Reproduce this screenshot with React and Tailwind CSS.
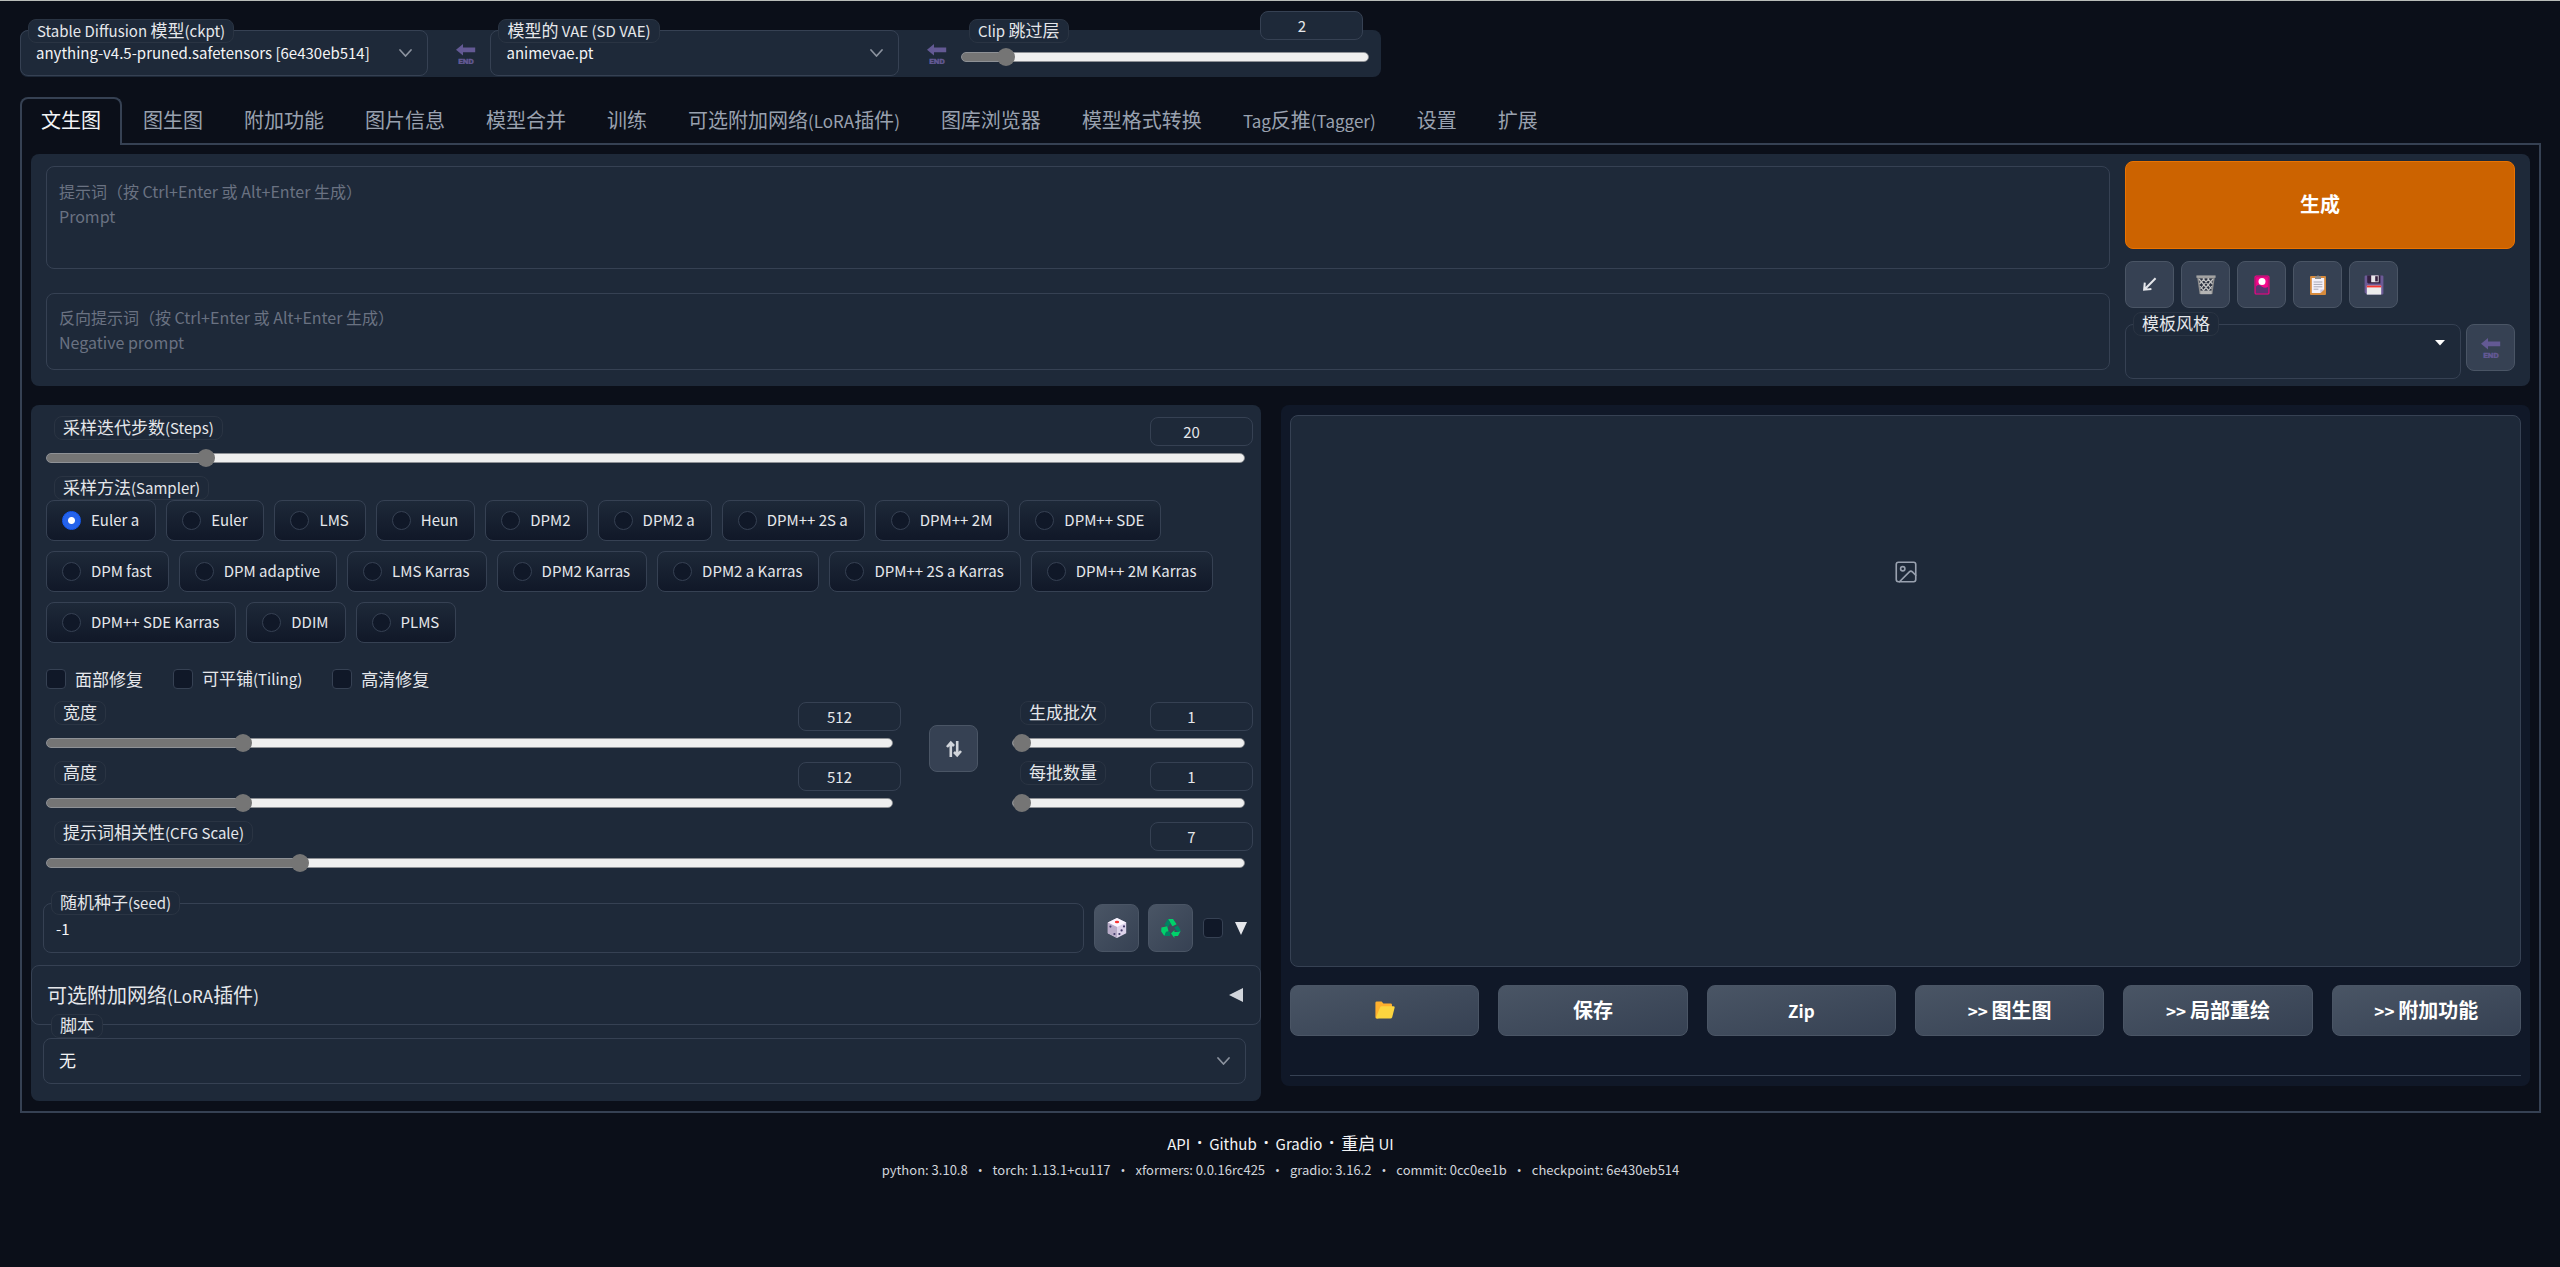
import { useState } from "react";
import { Image } from "lucide-react";

const TABS = [
  "文生图",
  "图生图",
  "附加功能",
  "图片信息",
  "模型合并",
  "训练",
  "可选附加网络(LoRA插件)",
  "图库浏览器",
  "模型格式转换",
  "Tag反推(Tagger)",
  "设置",
  "扩展",
];

const SAMPLERS = [
  "Euler a",
  "Euler",
  "LMS",
  "Heun",
  "DPM2",
  "DPM2 a",
  "DPM++ 2S a",
  "DPM++ 2M",
  "DPM++ SDE",
  "DPM fast",
  "DPM adaptive",
  "LMS Karras",
  "DPM2 Karras",
  "DPM2 a Karras",
  "DPM++ 2S a Karras",
  "DPM++ 2M Karras",
  "DPM++ SDE Karras",
  "DDIM",
  "PLMS",
];

const VERSIONS = [
  "python: 3.10.8",
  "torch: 1.13.1+cu117",
  "xformers: 0.0.16rc425",
  "gradio: 3.16.2",
  "commit: 0cc0ee1b",
  "checkpoint: 6e430eb514",
];

const LINKS = [
  { text: "API", href: "#api" },
  { text: "Github", href: "#github" },
  { text: "Gradio", href: "#gradio" },
  { text: "重启 UI", href: "#reload" },
];

// Latin runs are set a little smaller than the Chinese around them
function Mixed({ text, latin = "text-[15px]" }) {
  return (
    <span className="whitespace-pre">
      {text.split(/([\x20-\x7e]+)/).map((part, i) =>
        i % 2 === 1 ? (
          <span key={i} className={latin}>
            {part}
          </span>
        ) : (
          part
        )
      )}
    </span>
  );
}

function EndIcon() {
  return (
    <svg width="20" height="20" viewBox="0 0 20 20" fill="#635994" aria-hidden="true">
      <path d="M0 5.700 7 0v3.400h12.200v4.800H7v3.300z" />
      <text
        x="10"
        y="19.500"
        textAnchor="middle"
        stroke="#635994"
        strokeWidth=".5"
        className="font-['Roboto',sans-serif] text-[8px] font-bold"
      >
        END
      </text>
    </svg>
  );
}

function Chevron({ className }) {
  return (
    <svg
      width="13"
      height="8"
      viewBox="0 0 13 8"
      fill="none"
      stroke="#8b929e"
      strokeWidth="1.700"
      strokeLinecap="round"
      aria-hidden="true"
      className={`pointer-events-none absolute ${className}`}
    >
      <path d="M1 1l5.500 6L12 1" />
    </svg>
  );
}

function ArrowIcon() {
  return (
    <svg width="15" height="15" viewBox="0 0 15 15" aria-hidden="true">
      <path d="M13.600 1.200 4.200 10.800" stroke="#e5e7eb" strokeWidth="2" />
      <path d="M1 13.800 1.800 5.600l2 .2-.3 3.800 2 2 3.800-.5.200 2z" fill="#e5e7eb" />
    </svg>
  );
}

function TrashIcon() {
  return (
    <svg width="20" height="20" viewBox="0 0 20 20" aria-hidden="true">
      <path d="M1 1h18l-2.600 18H3.600z" fill="#8c8c8c" />
      <path d="M3 3.400h14L15.200 16H4.800z" fill="#2b3140" />
      <path
        d="M3 4l10 12M7 3.400 15.400 14M11.600 3.400 16.400 9M4 11l4 5M17 4 7 16M13 3.400 4.600 14M8.400 3.400 3.600 9M16 11l-4 5"
        stroke="#c4c4c4"
        strokeWidth="1.200"
      />
      <path d="M.4.400h19.200v2.400H.4z" fill="#a3a3a3" />
      <path d="M4.400 15.600h11.200v3.600H4.400z" fill="#b4b4b4" />
    </svg>
  );
}

function CardIcon() {
  return (
    <svg width="16" height="20" viewBox="0 0 16 20" aria-hidden="true">
      <rect x=".5" y=".5" width="15" height="19" rx="1.600" fill="#f5078b" />
      <rect x="1.800" y="1.800" width="12.400" height="16.400" fill="none" stroke="#9c1668" strokeWidth=".7" />
      <path d="M2 11.400q3-3 6 .4 3 1.600 6 .2v6.200H2z" fill="#5b3470" />
      <circle cx="8" cy="6.400" r="3.500" fill="#fff" />
    </svg>
  );
}

function ClipboardIcon() {
  return (
    <svg width="16" height="20" viewBox="0 0 16 20" aria-hidden="true">
      <rect x="0" y="1" width="16" height="19" rx="1" fill="#d68a3c" />
      <path d="M1.800 3h12.400v11.400L10.400 18H1.800z" fill="#f4f1fa" />
      <path d="M14.200 14.400 10.400 18v-3.600z" fill="#cfc6dd" />
      <path d="M6.400 1.400a1.700 1.400 0 0 1 3.200 0H11V4H5V1.400z" fill="#8b8b8b" />
      <path d="M3.600 7h8.800M3.600 9.400h8.800M3.600 11.800h8.800M3.600 14.200h4.800" stroke="#a7a7b4" strokeWidth="1" />
    </svg>
  );
}

function FloppyIcon() {
  return (
    <svg width="20" height="20" viewBox="0 0 20 20" aria-hidden="true">
      <path d="M1.600.4h16.800q1 0 1 1v17.200q0 1-1 1H3L.6 17.400v-16q0-1 1-1z" fill="#6c5a96" />
      <path d="M3.200.4h13.200v8H4.400L3.200 7.400z" fill="#34203f" />
      <path d="M7.200.4h7.400v6.800H7.200z" fill="#e8e6ea" />
      <path d="M11.200 1.200h2.600v5.200h-2.600z" fill="#34203f" />
      <path d="M2.800 10.600h14.400v9H2.800z" fill="#ececec" />
      <path d="M2.800 10.600h14.400v1.800H2.800z" fill="#f5352f" />
    </svg>
  );
}

function DiceIcon() {
  return (
    <svg width="20" height="20" viewBox="0 0 20 20" aria-hidden="true">
      <path d="M10 0 19.200 4.600v10.600L10 20 .8 15.200V4.600z" fill="#ddd3ea" />
      <path d="M10 0 19.200 4.600 10 9 .8 4.600z" fill="#faf5ff" />
      <path d="M.8 4.600 10 9v11L.8 15.200z" fill="#b9acc9" />
      <ellipse cx="10" cy="4" rx="2.200" ry="1.200" fill="#f8312f" />
      <g fill="#433b6b">
        <circle cx="3.400" cy="8.600" r="1.100" />
        <circle cx="7.400" cy="16" r="1.100" />
        <circle cx="12.400" cy="16" r="1.100" />
        <circle cx="14.600" cy="12.400" r="1.100" />
        <circle cx="17" cy="8.400" r="1.100" />
      </g>
    </svg>
  );
}

function RecycleIcon() {
  return (
    <svg width="20" height="20" viewBox="0 0 20 20" aria-hidden="true">
      <path d="M7 1h5l3.600 5.200-4.200 2-1.800-3z" fill="#00d26a" />
      <path d="M7 1 9.400 5l-2.200 4-3.800-2.200z" fill="#008463" />
      <path d="m.4 9.600 5.800-1.400 1.400 5.400-2 .2L3.400 18 .2 13.600z" fill="#00d26a" />
      <path d="M3.400 18 5 13.800h4.200V18z" fill="#008463" />
      <path d="M10 15.600 13.400 12v2h3l3.200-1-2.600 5h-3.600v2z" fill="#00d26a" />
      <path d="m13.200 9.600 3.600-2.200 3 5.200-3.200 1.600z" fill="#008463" />
    </svg>
  );
}

function FolderIcon() {
  return (
    <svg width="20" height="18" viewBox="0 0 20 20" preserveAspectRatio="none" aria-hidden="true">
      <path d="M.4 2Q.4.600 1.800.6h4.800l1.800 2.200h7.200q1.400 0 1.400 1.400V8L3 19.400H1.800Q.4 19.400.4 18z" fill="#ffb02e" />
      <path d="M6.800 5.800h11.600q1.600 0 1.200 1.600l-2.400 10.600q-.4 1.400-1.800 1.400H2.200q-1.500 0-1.100-1.400L5 7.200q.4-1.400 1.800-1.400z" fill="#fcd53f" />
    </svg>
  );
}

function SwapIcon() {
  return (
    <svg width="16" height="18" viewBox="0 0 16 18" fill="none" stroke="#d1d5db" strokeWidth="2.600" aria-hidden="true">
      <path d="M4.800 17V2.500M1 7l3.800-4.400L8 6M11.200 1v14.500M15 11l-3.800 4.400L8 12" />
    </svg>
  );
}

function NumberBox({ label, value, onChange, className = "" }) {
  return (
    <input
      type="text"
      inputMode="numeric"
      aria-label={label}
      value={value}
      onChange={(e) => onChange(e.target.value)}
      className={`h-[29px] w-[103px] rounded-lg border border-gray-700 bg-gray-800 pr-5 text-center text-[15px] text-gray-200 focus:outline-none ${className}`}
    />
  );
}

// small bordered caption that sits over the edge of a field
function Caption({ htmlFor, text, className = "" }) {
  return (
    <label
      htmlFor={htmlFor}
      className={`inline-flex h-6 items-center rounded-lg border border-[#2a3443] bg-gray-800 px-2 pb-[3px] text-[17px] text-gray-200 ${className}`}
    >
      <Mixed text={text} />
    </label>
  );
}

function Range({ id, value, min, max, step = 1, onChange, className = "" }) {
  const fill = ((value - min) / (max - min)) * 100;
  return (
    <input
      id={id}
      type="range"
      min={min}
      max={max}
      step={step}
      value={value}
      onChange={(e) => onChange(e.target.value)}
      style={{ "--fill": `${fill}%` }}
      className={`block h-5 w-full appearance-none bg-transparent focus:outline-none [&::-webkit-slider-runnable-track]:h-[10px] [&::-webkit-slider-runnable-track]:rounded-full [&::-webkit-slider-runnable-track]:border [&::-webkit-slider-runnable-track]:border-[#8e9196] [&::-webkit-slider-runnable-track]:bg-[linear-gradient(to_right,#757575_var(--fill),#efefef_var(--fill))] [&::-webkit-slider-thumb]:mt-[-5px] [&::-webkit-slider-thumb]:size-[18px] [&::-webkit-slider-thumb]:appearance-none [&::-webkit-slider-thumb]:rounded-full [&::-webkit-slider-thumb]:bg-[#757575] ${className}`}
    />
  );
}

function Slider({ id, label, initial, min, max, step }) {
  const [value, setValue] = useState(initial);
  return (
    <div className="pl-1">
      <div className="flex h-8 items-start justify-between pl-2">
        <Caption htmlFor={id} text={label} />
        <NumberBox label={label} value={value} onChange={setValue} className="mt-px" />
      </div>
      <div className="pr-2">
        <Range id={id} value={value} min={min} max={max} step={step} onChange={setValue} />
      </div>
    </div>
  );
}

function TopSelect({ id, label, value }) {
  return (
    <div className="relative flex-1">
      <Caption htmlFor={id} text={label} className="absolute -top-[11px] left-2" />
      <select
        id={id}
        className="block h-[46px] w-full appearance-none rounded-lg border border-gray-700 bg-gray-800 px-[15px] text-[15px] text-gray-100 focus:outline-none"
      >
        <option>{value}</option>
      </select>
      <Chevron className="top-[19px] right-4" />
    </div>
  );
}

function Checkbox({ label }) {
  return (
    <label className="flex items-center gap-[9px] text-[17px] leading-5 text-gray-200">
      <input
        type="checkbox"
        className="size-5 appearance-none rounded border border-gray-700 bg-gray-900 checked:bg-blue-600"
      />
      <Mixed text={label} />
    </label>
  );
}

function ToolButton({ label, children, className = "" }) {
  return (
    <button
      type="button"
      aria-label={label}
      className={`flex h-[47px] w-[49px] shrink-0 items-center justify-center rounded-lg border border-gray-600 bg-gray-700 ${className}`}
    >
      {children}
    </button>
  );
}

function QuickSettings() {
  const [clip, setClip] = useState(2);
  return (
    <div className="flex h-[47px] w-[54%] rounded-lg bg-gray-800 pr-3">
      <TopSelect id="ckpt" label="Stable Diffusion 模型(ckpt)" value="anything-v4.5-pruned.safetensors [6e430eb514]" />
      <button type="button" aria-label="刷新模型" className="flex w-[62px] items-center justify-center pl-[14px]">
        <EndIcon />
      </button>
      <TopSelect id="vae" label="模型的 VAE (SD VAE)" value="animevae.pt" />
      <button type="button" aria-label="刷新 VAE" className="flex w-[62px] items-center justify-center pl-[14px]">
        <EndIcon />
      </button>
      <div className="relative flex-1">
        <Caption htmlFor="clip" text="Clip 跳过层" className="absolute -top-[11px] left-2" />
        <NumberBox label="Clip 跳过层" value={clip} onChange={setClip} className="absolute -top-[19px] right-[6px]" />
        <Range id="clip" value={clip} min={1} max={12} onChange={setClip} className="mt-[17px]" />
      </div>
    </div>
  );
}

function PromptPanel() {
  return (
    <section className="flex gap-[15px] rounded-lg bg-gray-800 px-[15px] pt-[7px] pb-[7px]">
      <div className="flex flex-1 flex-col gap-6 pt-[5px]">
        <textarea
          aria-label="提示词"
          placeholder={"提示词（按 Ctrl+Enter 或 Alt+Enter 生成）\nPrompt"}
          className="block h-[103px] w-full resize-none rounded-lg border border-gray-700 bg-gray-800 px-3 py-3 text-base leading-[25px] text-gray-100 placeholder:text-gray-500 focus:outline-none"
        />
        <textarea
          aria-label="反向提示词"
          placeholder={"反向提示词（按 Ctrl+Enter 或 Alt+Enter 生成）\nNegative prompt"}
          className="block h-[77px] w-full resize-none rounded-lg border border-gray-700 bg-gray-800 px-3 py-[11px] text-base leading-[25px] text-gray-100 placeholder:text-gray-500 focus:outline-none"
        />
      </div>
      <div className="w-[390px] shrink-0">
        <button
          type="button"
          className="h-[88px] w-full rounded-lg border border-[#ea7300] bg-[#cc6300] pb-[3px] text-xl font-bold text-white"
        >
          生成
        </button>
        <div className="mt-3 flex gap-[7px]">
          <ToolButton label="读取参数"><ArrowIcon /></ToolButton>
          <ToolButton label="清空提示词"><TrashIcon /></ToolButton>
          <ToolButton label="显示附加网络"><CardIcon /></ToolButton>
          <ToolButton label="应用模板"><ClipboardIcon /></ToolButton>
          <ToolButton label="保存模板"><FloppyIcon /></ToolButton>
        </div>
        <div className="mt-4 flex gap-[5px]">
          <div className="relative flex-1">
            <Caption htmlFor="styles" text="模板风格" className="absolute -top-3 left-2" />
            <select
              id="styles"
              className="block h-[55px] w-full appearance-none rounded-lg border border-gray-700 bg-gray-800 px-3 text-base text-gray-100"
            />
            <svg className="pointer-events-none absolute top-4 right-4" width="10" height="6" viewBox="0 0 10 6" fill="#fff">
              <path d="M0 0h10L5 5.500z" />
            </svg>
          </div>
          <ToolButton label="刷新模板"><EndIcon /></ToolButton>
        </div>
      </div>
    </section>
  );
}

function SettingsPanel() {
  const [sampler, setSampler] = useState("Euler a");
  return (
    <section className="rounded-lg bg-gray-800 pt-[11px] pb-[17px]">
      <div className="pr-2 pl-[11px]">
        <Slider id="steps" label="采样迭代步数(Steps)" initial={20} min={1} max={150} />
      </div>

      <div role="radiogroup" aria-label="采样方法" className="mt-2 pl-[15px]">
        <Caption text="采样方法(Sampler)" className="ml-2 align-top" />
        <div className="flex flex-wrap gap-[10px]">
          {SAMPLERS.map((name) => (
            <label
              key={name}
              className="flex h-[41px] items-center gap-[10px] rounded-lg border border-gray-700 bg-linear-to-b from-gray-800 to-gray-900 pr-4 pl-[15px] text-[15px] text-gray-200"
            >
              <input
                type="radio"
                name="sampler"
                checked={sampler === name}
                onChange={() => setSampler(name)}
                className="size-[19px] appearance-none rounded-full border border-gray-700 bg-gray-900 checked:border-blue-600 checked:bg-[radial-gradient(circle,#fff_0_3px,#2563eb_4px)]"
              />
              {name}
            </label>
          ))}
        </div>
      </div>

      <div className="mt-[25px] flex gap-[30px] pl-[15px]">
        <Checkbox label="面部修复" />
        <Checkbox label="可平铺(Tiling)" />
        <Checkbox label="高清修复" />
      </div>

      <div className="mt-3 flex pr-2 pl-[11px]">
        <div className="flex flex-1 flex-col gap-2">
          <Slider id="width" label="宽度" initial={512} min={64} max={2048} step={8} />
          <Slider id="height" label="高度" initial={512} min={64} max={2048} step={8} />
        </div>
        <ToolButton label="交换宽高" className="mt-6 mr-[30px] ml-7"><SwapIcon /></ToolButton>
        <div className="flex w-[245px] flex-col gap-2">
          <Slider id="batch-count" label="生成批次" initial={1} min={1} max={100} />
          <Slider id="batch-size" label="每批数量" initial={1} min={1} max={8} />
        </div>
      </div>

      <div className="mt-2 pr-2 pl-[11px]">
        <Slider id="cfg" label="提示词相关性(CFG Scale)" initial={7} min={1} max={30} />
      </div>

      <div className="mt-[30px] flex items-center pr-[14px] pl-3">
        <div className="relative flex-1">
          <Caption htmlFor="seed" text="随机种子(seed)" className="absolute -top-3 left-2" />
          <input
            id="seed"
            type="text"
            defaultValue="-1"
            className="block h-[50px] w-full rounded-lg border border-gray-700 bg-gray-800 px-3 text-[15px] text-gray-100 focus:outline-none"
          />
        </div>
        <button
          type="button"
          aria-label="随机"
          className="ml-[10px] flex h-12 w-[45px] items-center justify-center rounded-lg border border-gray-600 bg-linear-to-br from-gray-600 to-gray-700"
        >
          <DiceIcon />
        </button>
        <button
          type="button"
          aria-label="重用种子"
          className="ml-[9px] flex h-12 w-[45px] items-center justify-center rounded-lg border border-gray-600 bg-linear-to-br from-gray-600 to-gray-700"
        >
          <RecycleIcon />
        </button>
        <label className="ml-[10px] flex items-center gap-3">
          <input
            type="checkbox"
            aria-label="更多种子选项"
            className="size-5 appearance-none rounded border border-gray-700 bg-gray-900 checked:bg-blue-600"
          />
          <svg width="12" height="13" viewBox="0 0 12 13" fill="#e5e7eb" aria-hidden="true">
            <path d="M0 0h12L6 13z" />
          </svg>
        </label>
      </div>

      <button
        type="button"
        className="mt-3 flex h-[60px] w-full items-center justify-between rounded-lg border border-gray-700 pr-[17px] pl-[15px] text-xl text-gray-200"
      >
        <Mixed text="可选附加网络(LoRA插件)" latin="text-[17px]" />
        <svg width="14" height="14" viewBox="0 0 14 14" fill="#d1d5db" aria-hidden="true">
          <path d="M14 0v14L0 7z" />
        </svg>
      </button>

      <div className="relative mt-[13px] mr-[15px] ml-3">
        <Caption htmlFor="script" text="脚本" className="absolute -top-6 left-2" />
        <select
          id="script"
          className="block h-[46px] w-full appearance-none rounded-lg border border-gray-700 bg-gray-800 px-[15px] pb-[2px] text-[17px] text-gray-100 focus:outline-none"
        >
          <option>无</option>
        </select>
        <Chevron className="top-[19px] right-4" />
      </div>
    </section>
  );
}

function OutputPanel() {
  const actions = ["保存", "Zip", ">> 图生图", ">> 局部重绘", ">> 附加功能"];
  const buttonClass =
    "flex h-[51px] items-center justify-center rounded-lg border border-gray-600 bg-linear-to-br from-gray-600 to-gray-700 pb-[2px] text-xl font-bold text-white";
  return (
    <section className="rounded-lg bg-gray-900 px-[9px] pt-[10px] pb-[10px]">
      <div className="flex h-[552px] justify-center rounded-lg border border-gray-700 bg-gray-800 pt-[143px]">
        <Image className="size-[26px] text-gray-400" strokeWidth={1.5} />
      </div>
      <div className="mt-[18px] grid grid-cols-6 gap-[19px]">
        <button type="button" aria-label="打开文件夹" className={buttonClass}>
          <FolderIcon />
        </button>
        {actions.map((action) => (
          <button key={action} type="button" className={buttonClass}>
            <Mixed text={action} latin="text-[17px]" />
          </button>
        ))}
      </div>
      <hr className="mt-[39px] border-gray-700" />
    </section>
  );
}

export default function App() {
  const [tab, setTab] = useState(TABS[0]);
  return (
    <div className="min-h-screen border-t border-[#b9bdb9] bg-[#0b0f19] pt-[29px] pr-[19px] pl-5 font-['Noto_Sans_CJK_SC',sans-serif] text-gray-200">
      <QuickSettings />

      <nav className="mt-5 flex">
        {TABS.map((name) => (
          <button
            key={name}
            type="button"
            onClick={() => setTab(name)}
            className={`h-12 text-xl ${
              tab === name
                ? "rounded-t-lg border-2 border-b-0 border-gray-700 px-[19px] pb-1 text-gray-100"
                : "border-b-2 border-gray-700 pr-5 pb-px pl-[21px] text-gray-400"
            }`}
          >
            <Mixed text={name} latin="text-[17px]" />
          </button>
        ))}
        <div className="flex-1 border-b-2 border-gray-700" />
      </nav>

      <main className="border-2 border-t-0 border-gray-700 px-[9px] pt-[9px] pb-[10px]">
        <PromptPanel />
        <div className="mt-[19px] grid grid-cols-[minmax(0,1230fr)_minmax(0,1249fr)] items-start gap-5">
          <SettingsPanel />
          <OutputPanel />
        </div>
      </main>

      <footer className="mt-[17px] pb-8">
        <div className="flex justify-center gap-[7px] text-[17px] leading-[26px] text-gray-100">
          {LINKS.map((link, i) => (
            <span key={link.href} className="flex gap-[7px]">
              {i > 0 && <span className="font-['Open_Sans',sans-serif] font-bold">·</span>}
              <a href={link.href}>
                <Mixed text={link.text} />
              </a>
            </span>
          ))}
        </div>
        <div className="flex justify-center gap-[10px] text-[13px] leading-[26px] text-gray-300">
          {VERSIONS.map((text, i) => (
            <span key={text} className="flex gap-[10px]">
              {i > 0 && <span className="font-['Open_Sans',sans-serif]">•</span>}
              {text}
            </span>
          ))}
        </div>
      </footer>
    </div>
  );
}
